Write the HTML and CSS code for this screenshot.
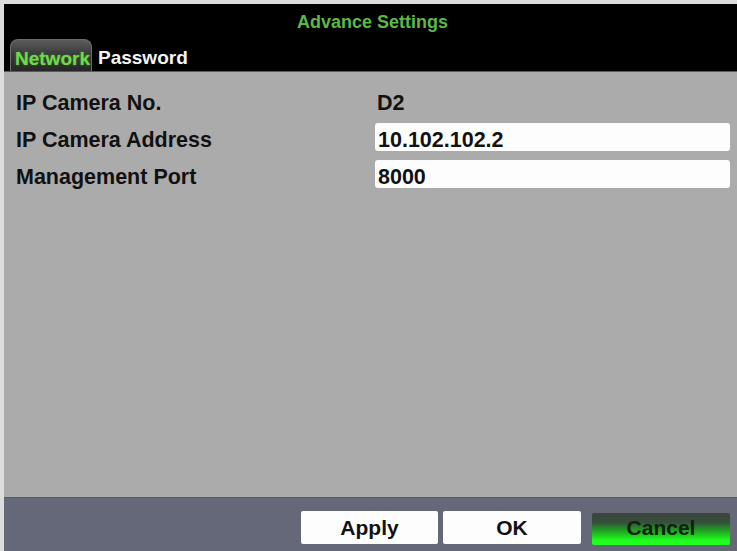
FILE: index.html
```html
<!DOCTYPE html>
<html>
<head>
<meta charset="utf-8">
<link rel="stylesheet" href="styles.css">
</head>
<body>
<div class="window">
  <div class="header">
    <div class="title">Advance Settings</div>
    <div class="tabs">
      <div class="tab active">Network</div>
      <div class="tab">Password</div>
    </div>
  </div>
  <div class="content">
    <div class="form">
      <div class="label">IP Camera No.</div>
      <div class="value">D2</div>
      <div class="label">IP Camera Address</div>
      <div class="value field">10.102.102.2</div>
      <div class="label">Management Port</div>
      <div class="value field">8000</div>
    </div>
  </div>
  <div class="footer">
    <div class="btn">Apply</div>
    <div class="btn ok">OK</div>
    <div class="btn cancel">Cancel</div>
  </div>
</div>
</body>
</html>
```

FILE: styles.css
```css
html, body {
  margin: 0;
  padding: 0;
  background: #dcdcdc;
}
body {
  width: 737px;
  height: 551px;
  overflow: hidden;
  font-family: "Liberation Sans", Arial, sans-serif;
}
.window {
  margin: 4px 0 0 4px;
  width: 733px;
  height: 547px;
  display: flex;
  flex-direction: column;
}
.header {
  background: #000;
  height: 68px;
  box-sizing: border-box;
  border-bottom: 1px solid #5a5a5a;
  display: flex;
  flex-direction: column;
}
.title {
  text-align: center;
  color: #5cb848;
  font-weight: bold;
  font-size: 18px;
  line-height: 22px;
  padding-top: 7px;
  height: 35px;
  box-sizing: border-box;
  padding-left: 4px;
}
.tabs {
  display: flex;
  align-items: flex-end;
  padding-left: 6px;
  height: 32px;
}
.tab {
  font-weight: bold;
  font-size: 19px;
  line-height: 27px;
  height: 32px;
  box-sizing: border-box;
  padding: 5px 4px 0 4px;
  color: #f4f4f4;
}
.tab.active {
  width: 82px;
  padding: 5px 0 0 4px;
  color: #6fd94c;
  border: 1px solid #6c6c6c;
  border-bottom: none;
  border-radius: 8px 8px 0 0;
  background: linear-gradient(to bottom, #5c5c5c 0%, #3a3a3a 45%, #262626 100%);
  text-shadow: 0 0 2px rgba(90, 220, 60, 0.5);
  margin-right: 2px;
}
.content {
  background: #ababab;
  flex: 1;
  padding: 14px 0 0 12px;
}
.form {
  display: grid;
  grid-template-columns: 359px 355px;
  grid-auto-rows: 28px;
  row-gap: 9px;
}
.label, .value {
  font-weight: bold;
  font-size: 21.5px;
  line-height: 28px;
  padding-top: 3px;
  height: 28px;
  box-sizing: border-box;
  color: #111;
}
.value {
  padding-left: 2px;
}
.field {
  background: #fdfdfd;
  border-radius: 3px;
  padding-left: 3px;
}
.footer {
  background: #646879;
  height: 54px;
  box-sizing: border-box;
  border-top: 1px solid #585c6c;
  display: flex;
  justify-content: flex-end;
  padding: 13px 7px 0 0;
}
.btn {
  width: 137px;
  height: 33px;
  background: #fdfdfd;
  border-radius: 2px;
  text-align: center;
  font-weight: bold;
  font-size: 21px;
  line-height: 33px;
  color: #111;
}
.btn.ok {
  width: 138px;
  margin-left: 5px;
}
.btn.cancel {
  width: 138px;
  margin-left: 11px;
  margin-top: 2px;
  height: 32px;
  line-height: 30px;
  color: #14200f;
  background: linear-gradient(to bottom, #3d433d 0%, #33503a 30%, #1fb01f 60%, #1efc1e 85%, #22ff22 100%);
}
```
